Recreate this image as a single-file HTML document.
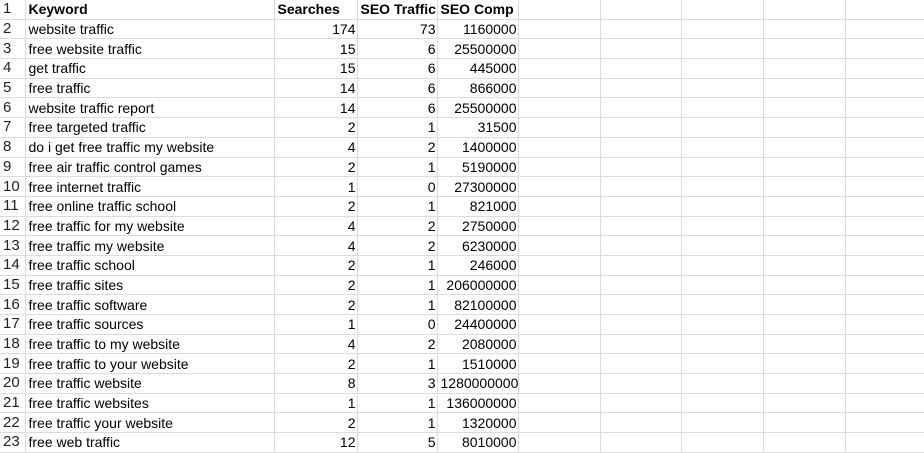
<!DOCTYPE html>
<html><head><style>
body{margin:0;background:#fff;width:924px;height:452px;overflow:hidden;font-family:"Liberation Sans",sans-serif;font-size:14px;color:#000}
table{border-collapse:collapse;table-layout:fixed;position:absolute;left:0;top:0;width:927px}
td{height:18.7px;border:1px solid #dcdcdc;padding:0 1px 0 3px;white-space:nowrap;overflow:visible;line-height:18px}
td:first-child{border-left:none;padding-left:3px;font-size:15px;color:#222}
tr:first-child td{border-top:none;font-weight:bold}
tr:first-child td:first-child{font-weight:normal}
td.n{text-align:right}
</style></head><body>
<table>
<colgroup><col style="width:25px"><col style="width:249px"><col style="width:83px"><col style="width:80px"><col style="width:81px"><col style="width:82px"><col style="width:81px"><col style="width:82px"><col style="width:82px"><col style="width:82px"></colgroup>
<tr><td>1</td><td>Keyword</td><td>Searches</td><td>SEO Traffic</td><td>SEO Comp</td><td></td><td></td><td></td><td></td><td></td></tr>
<tr><td>2</td><td>website traffic</td><td class=n>174</td><td class=n>73</td><td class=n>1160000</td><td></td><td></td><td></td><td></td><td></td></tr>
<tr><td>3</td><td>free website traffic</td><td class=n>15</td><td class=n>6</td><td class=n>25500000</td><td></td><td></td><td></td><td></td><td></td></tr>
<tr><td>4</td><td>get traffic</td><td class=n>15</td><td class=n>6</td><td class=n>445000</td><td></td><td></td><td></td><td></td><td></td></tr>
<tr><td>5</td><td>free traffic</td><td class=n>14</td><td class=n>6</td><td class=n>866000</td><td></td><td></td><td></td><td></td><td></td></tr>
<tr><td>6</td><td>website traffic report</td><td class=n>14</td><td class=n>6</td><td class=n>25500000</td><td></td><td></td><td></td><td></td><td></td></tr>
<tr><td>7</td><td>free targeted traffic</td><td class=n>2</td><td class=n>1</td><td class=n>31500</td><td></td><td></td><td></td><td></td><td></td></tr>
<tr><td>8</td><td>do i get free traffic my website</td><td class=n>4</td><td class=n>2</td><td class=n>1400000</td><td></td><td></td><td></td><td></td><td></td></tr>
<tr><td>9</td><td>free air traffic control games</td><td class=n>2</td><td class=n>1</td><td class=n>5190000</td><td></td><td></td><td></td><td></td><td></td></tr>
<tr><td>10</td><td>free internet traffic</td><td class=n>1</td><td class=n>0</td><td class=n>27300000</td><td></td><td></td><td></td><td></td><td></td></tr>
<tr><td>11</td><td>free online traffic school</td><td class=n>2</td><td class=n>1</td><td class=n>821000</td><td></td><td></td><td></td><td></td><td></td></tr>
<tr><td>12</td><td>free traffic for my website</td><td class=n>4</td><td class=n>2</td><td class=n>2750000</td><td></td><td></td><td></td><td></td><td></td></tr>
<tr><td>13</td><td>free traffic my website</td><td class=n>4</td><td class=n>2</td><td class=n>6230000</td><td></td><td></td><td></td><td></td><td></td></tr>
<tr><td>14</td><td>free traffic school</td><td class=n>2</td><td class=n>1</td><td class=n>246000</td><td></td><td></td><td></td><td></td><td></td></tr>
<tr><td>15</td><td>free traffic sites</td><td class=n>2</td><td class=n>1</td><td class=n>206000000</td><td></td><td></td><td></td><td></td><td></td></tr>
<tr><td>16</td><td>free traffic software</td><td class=n>2</td><td class=n>1</td><td class=n>82100000</td><td></td><td></td><td></td><td></td><td></td></tr>
<tr><td>17</td><td>free traffic sources</td><td class=n>1</td><td class=n>0</td><td class=n>24400000</td><td></td><td></td><td></td><td></td><td></td></tr>
<tr><td>18</td><td>free traffic to my website</td><td class=n>4</td><td class=n>2</td><td class=n>2080000</td><td></td><td></td><td></td><td></td><td></td></tr>
<tr><td>19</td><td>free traffic to your website</td><td class=n>2</td><td class=n>1</td><td class=n>1510000</td><td></td><td></td><td></td><td></td><td></td></tr>
<tr><td>20</td><td>free traffic website</td><td class=n>8</td><td class=n>3</td><td class=n>1280000000</td><td></td><td></td><td></td><td></td><td></td></tr>
<tr><td>21</td><td>free traffic websites</td><td class=n>1</td><td class=n>1</td><td class=n>136000000</td><td></td><td></td><td></td><td></td><td></td></tr>
<tr><td>22</td><td>free traffic your website</td><td class=n>2</td><td class=n>1</td><td class=n>1320000</td><td></td><td></td><td></td><td></td><td></td></tr>
<tr><td>23</td><td>free web traffic</td><td class=n>12</td><td class=n>5</td><td class=n>8010000</td><td></td><td></td><td></td><td></td><td></td></tr>
</table>
</body></html>
